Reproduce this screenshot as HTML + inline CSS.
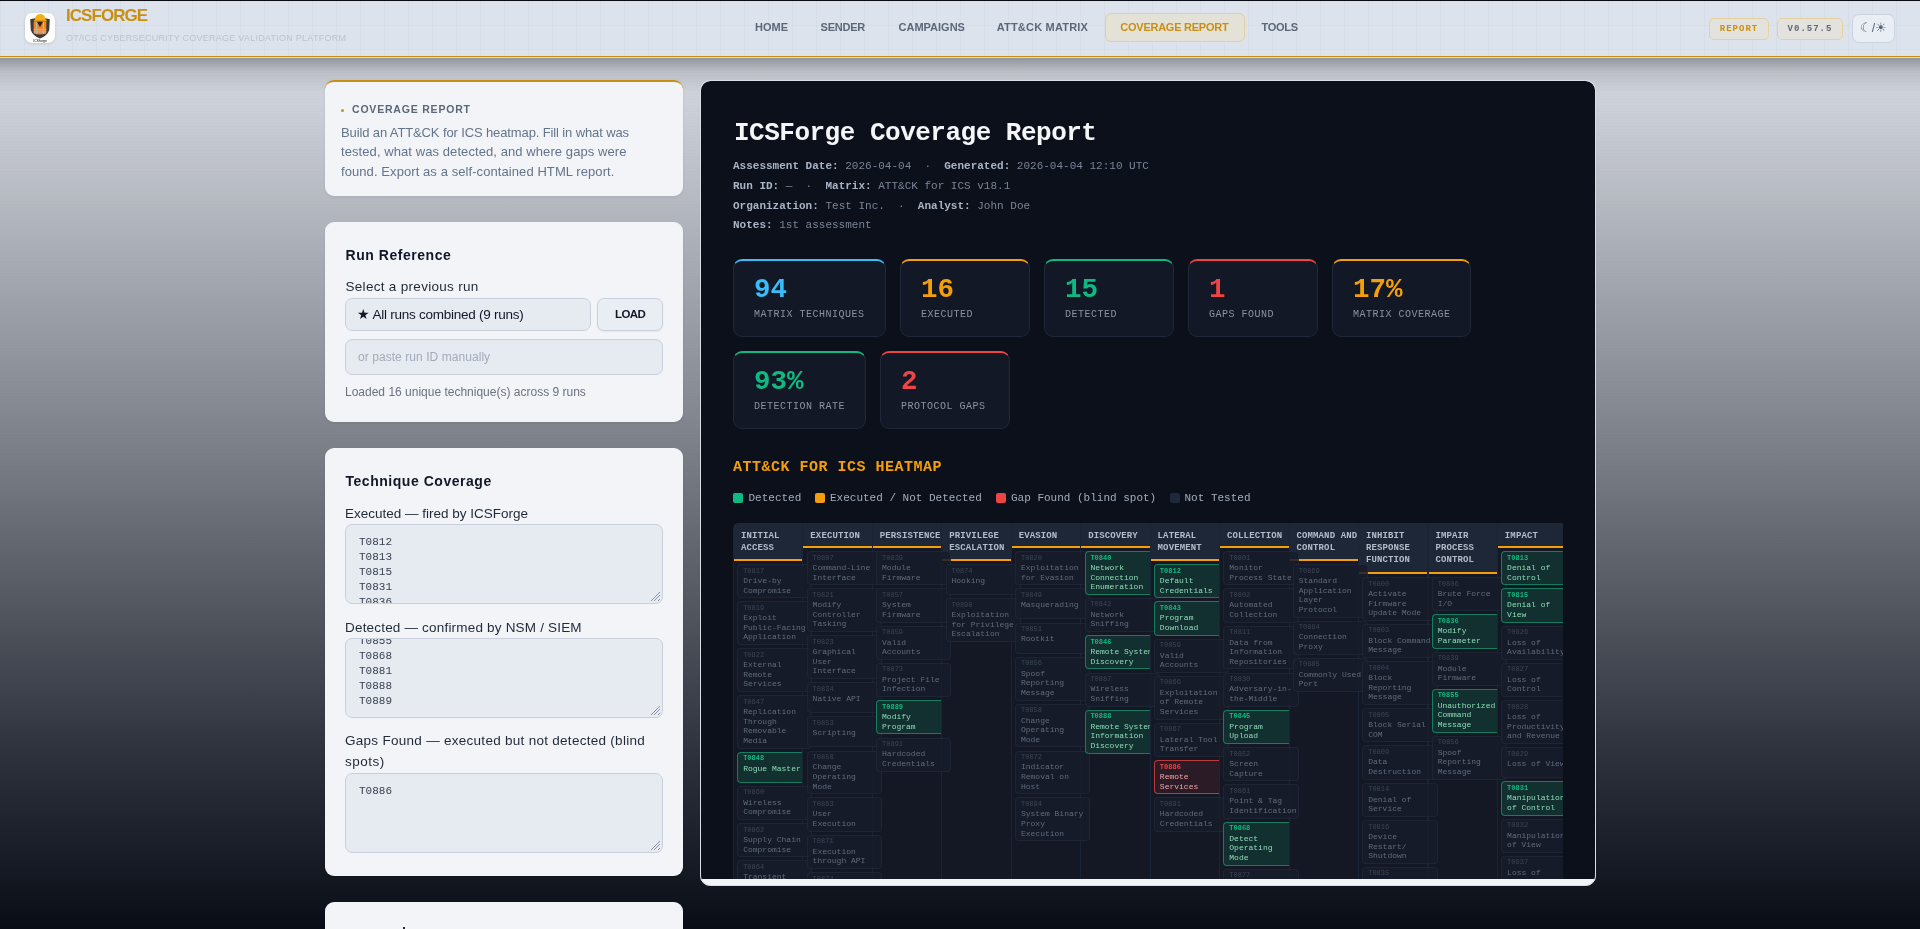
<!DOCTYPE html>
<html><head><meta charset="utf-8">
<style>
*{box-sizing:border-box;margin:0;padding:0}
html,body{width:1920px;height:929px;overflow:hidden}
body{font-family:"Liberation Sans",sans-serif;position:relative;
background:repeating-linear-gradient(to bottom,rgba(0,0,0,.008) 0 1px,transparent 1px 3px),linear-gradient(to bottom,#c9cdd5 0px,#cdd1d9 100px,#7b7f87 450px,#2b303a 760px,#090d16 929px);}
.abs{position:absolute}
/* header */
#topline{position:absolute;left:0;top:0;width:1920px;height:1px;background:#0b0d12}
#hdr{position:absolute;left:0;top:1px;width:1920px;height:55px;background-color:#dde3ec;
background-image:linear-gradient(to right,rgba(150,160,180,.08) 1px,transparent 1px),linear-gradient(to bottom,rgba(150,160,180,.08) 1px,transparent 1px);
background-size:24px 24px;background-position:0 0,0 0;}
#gold{position:absolute;left:0;top:56px;width:1920px;height:1px;background:#c98f12}
#hl2{position:absolute;left:0;top:57px;width:1920px;height:1px;background:#d3d9e6}
#shadow{position:absolute;left:0;top:58px;width:1920px;height:34px;background:linear-gradient(to bottom,rgba(70,72,78,.42),rgba(70,72,78,.12) 40%,rgba(70,72,78,0))}
.logo{position:absolute;left:25px;top:13px;width:30px;height:30px;border-radius:7px;background:#fdfdf9;box-shadow:0 1px 3px rgba(0,0,0,.12);overflow:hidden}
.brand{position:absolute;left:66px;top:7.4px;font-weight:bold;font-size:17px;color:#c98f12;letter-spacing:-0.95px;line-height:1}
.sub{position:absolute;left:66px;top:33.6px;font-size:9px;color:#bcc3cf;letter-spacing:0.25px;line-height:1;white-space:nowrap}
.nav{position:absolute;top:21.9px;font-weight:bold;font-size:11px;color:#5b6779;letter-spacing:0;line-height:1;white-space:nowrap}
.navact{position:absolute;left:1105px;top:13px;width:140px;height:29px;border:1px solid #e3cf9b;border-radius:6px;background:#e4e1d6}
.badge{position:absolute;top:17.5px;height:22px;border:1px solid #e6d19e;border-radius:5px;background:#e3e2dc;font-family:"Liberation Mono",monospace;font-weight:bold;font-size:9px;letter-spacing:1px;line-height:20px;text-align:center}
.theme{position:absolute;left:1852px;top:14px;width:43px;height:29px;border:1px solid #cbd3df;border-radius:7px;background:#e9edf4;font-size:12.5px;color:#5b6779;text-align:center;line-height:27px}
/* cards */
.card{position:absolute;left:324.6px;width:358.6px;background:#f2f4f8;border-radius:9px;box-shadow:0 1px 3px rgba(0,0,0,.08)}

.t{position:absolute;white-space:nowrap;line-height:1}
.ta{position:absolute;left:345px;width:318px;height:80px;border:1px solid #c9d0db;border-radius:7px;background:#e6eaf1;overflow:hidden}
.ta .l{position:absolute;left:13px;font-family:"Liberation Mono",monospace;font-size:11px;line-height:1;color:#374151;white-space:nowrap}
.grip{position:absolute;right:2px;bottom:2px;width:9px;height:9px;background:linear-gradient(135deg,transparent 0 45%,#8a93a3 45% 52%,transparent 52% 65%,#8a93a3 65% 72%,transparent 72% 85%,#8a93a3 85% 92%,transparent 92%)}

.m{position:absolute;white-space:pre;line-height:1;font-family:"Liberation Mono",monospace}
.meta{font-size:11px;color:#7a8598}
.meta b{color:#a9b5c6}
.stat{position:absolute;height:78px;background:#121826;border:1px solid #1f2838;border-top:2px solid;border-radius:9px}
.stat .n{position:absolute;left:20px;top:15px;font-family:"Liberation Mono",monospace;font-weight:bold;font-size:27.5px;line-height:1;white-space:nowrap}
.stat .lb{position:absolute;left:20px;top:48.5px;font-family:"Liberation Mono",monospace;font-size:10px;letter-spacing:0.5px;line-height:1;color:#8a93a3;white-space:nowrap}
.sw{position:absolute;top:493px;width:10px;height:10px;border-radius:2px}
.lg{position:absolute;top:493.4px;font-family:"Liberation Mono",monospace;font-size:11px;line-height:1;color:#a3adbd;white-space:nowrap}
/*HEATCSS*/
#heat .hcol{position:absolute;background:#131824}
#heat .hhd{position:absolute;top:0;background:#1e2738;border-bottom:2px solid #f59e0b}
#heat .hht{position:absolute;font-family:"Liberation Mono",monospace;font-weight:bold;font-size:9px;letter-spacing:0.12px;line-height:1;color:#b3bcc9;white-space:nowrap}
#heat .hc{position:absolute;border:1px solid rgba(120,135,160,.09);border-radius:4px;background:rgba(22,28,42,.85);overflow:visible}
#heat .hc .hi{position:absolute;left:4.85px;font-family:"Liberation Mono",monospace;font-size:7px;line-height:1;color:#3d4656;white-space:nowrap}
#heat .hc .hn{position:absolute;left:4.85px;font-family:"Liberation Mono",monospace;font-size:8px;line-height:1;color:#626b7a;white-space:nowrap}
#heat .hc.g{background:#12302f;border-color:#177c5f;overflow:hidden;border-right:0;border-radius:4px 0 0 4px}
#heat .hc.g .hi{color:#10b981;font-weight:bold}
#heat .hc.g .hn{color:#8fdcb9}
#heat .hc.r{background:#2b1b27;border-color:#b83b3c;overflow:hidden;border-right:0;border-radius:4px 0 0 4px}
#heat .hc.r .hi{color:#ef4444;font-weight:bold}
#heat .hc.r .hn{color:#f0a3a3}
/*/HEATCSS*/</style></head><body><div style="position:absolute;left:0;top:0;width:1920px;height:929px;will-change:transform">
<div id="topline"></div>
<div id="hdr"></div>
<div id="gold"></div><div id="hl2"></div><div id="shadow"></div>
<div class="logo"><svg width="30" height="30" viewBox="0 0 30 30" style="position:absolute;left:0;top:0">
<path d="M5.2 6.2 Q15 3.8 24.8 6.2 L24.2 17 Q22.5 22.5 15 25.6 Q7.5 22.5 5.8 17 Z" fill="#3b3b3d"/>
<path d="M8.6 8.6 L12.6 8.2 L15 12 L17.4 8.2 L21.4 8.6 L21.2 20.5 Q15 22.6 8.8 20.5 Z" fill="#f08424"/>
<rect x="8.7" y="16" width="12.6" height="1.3" fill="#b9b3a8"/><rect x="8.7" y="18.3" width="12.6" height="1.2" fill="#b9b3a8"/>
<path d="M11.8 8.4 L15 14.2 L18.2 8.4 Z" fill="#2a2320"/><rect x="11" y="9" width="1.1" height="12" fill="#c9b7a0"/><rect x="17.9" y="9" width="1.1" height="12" fill="#c9b7a0"/><path d="M9.8 7.6 Q10.2 1.2 15.2 1 Q20.4 1.2 20.8 7.6 Z" fill="#f2b01c"/><rect x="8.8" y="6.8" width="13" height="1.6" rx=".8" fill="#e39e10"/>
<text x="15" y="28.6" font-family="Liberation Sans" font-size="3.6" text-anchor="middle" fill="#111">ICSforge</text>
</svg></div>
<div class="brand">ICSFORGE</div>
<div class="sub">OT/ICS CYBERSECURITY COVERAGE VALIDATION PLATFORM</div>
<div class="navact"></div>
<div class="nav" style="left:755px">HOME</div>
<div class="nav" style="left:820.6px;letter-spacing:-0.25px">SENDER</div>
<div class="nav" style="left:898.5px">CAMPAIGNS</div>
<div class="nav" style="left:996.7px;letter-spacing:0.2px">ATT&amp;CK MATRIX</div>
<div class="nav" style="left:1120.3px;color:#c98f12;letter-spacing:-0.25px">COVERAGE REPORT</div>
<div class="nav" style="left:1261.6px;letter-spacing:-0.3px">TOOLS</div>
<div class="badge" style="left:1709px;width:60px;color:#c98f12">REPORT</div>
<div class="badge" style="left:1777px;width:66px;color:#5b6779">V0.57.5</div>
<div class="theme">☾/☀</div>


<div class="card" style="top:80px;height:116px;border-top:2px solid #c98f12"></div>
<div class="card" style="top:222px;height:200px"></div>
<div class="card" style="top:448px;height:428px"></div>
<div class="card" style="top:902px;height:60px"></div><div class="abs" style="left:403px;top:926.5px;width:2px;height:3px;background:#222833"></div>
<div class="abs" style="left:340.9px;top:108.6px;width:3.5px;height:3.5px;border-radius:50%;background:#c98f12"></div>
<div class="t" id="c1h" style="left:352px;top:103.6px;font-size:10.5px;font-weight:bold;color:#5a6779;letter-spacing:0.8px">COVERAGE REPORT</div>
<div class="t" id="c1p1" style="left:341px;top:126px;font-size:13px;color:#64748b;letter-spacing:-0.12px">Build an ATT&amp;CK for ICS heatmap. Fill in what was</div>
<div class="t" id="c1p2" style="left:341px;top:145px;font-size:13px;color:#64748b;letter-spacing:0.08px">tested, what was detected, and where gaps were</div>
<div class="t" id="c1p3" style="left:341px;top:164.5px;font-size:13px;color:#64748b;letter-spacing:0.08px">found. Export as a self-contained HTML report.</div>

<div class="t" id="c2h" style="left:345.5px;top:248px;letter-spacing:0.54px;font-size:14px;font-weight:bold;color:#111827">Run Reference</div>
<div class="t" id="c2l" style="left:345.5px;top:280px;letter-spacing:0.3px;font-size:13.5px;color:#1f2937">Select a previous run</div>
<div class="abs" style="left:345px;top:298px;width:246px;height:33px;border:1px solid #c9d0db;border-radius:7px;background:#e6eaf1"></div>
<div class="t" id="c2s" style="left:357px;top:308px;letter-spacing:-0.25px;font-size:13.5px;color:#111827">★ All runs combined (9 runs)</div>
<div class="abs" style="left:597px;top:298px;width:66px;height:33px;border:1px solid #c9d0db;border-radius:7px;background:#e9edf4;box-shadow:0 1px 2px rgba(0,0,0,.06)"></div>
<div class="t" id="c2b" style="left:615px;top:309px;font-size:11.5px;font-weight:bold;color:#111827;letter-spacing:-0.6px">LOAD</div>
<div class="abs" style="left:345px;top:339px;width:318px;height:36px;border:1px solid #c9d0db;border-radius:7px;background:#e6eaf1"></div>
<div class="t" id="c2i" style="left:358px;top:351px;letter-spacing:0.06px;font-size:12px;color:#a3abb9">or paste run ID manually</div>
<div class="t" id="c2n" style="left:345px;top:386px;font-size:12px;color:#6b7280">Loaded 16 unique technique(s) across 9 runs</div>

<div class="t" id="c3h" style="left:345.5px;top:473.5px;letter-spacing:0.53px;font-size:14px;font-weight:bold;color:#111827">Technique Coverage</div>
<div class="t" id="c3a" style="left:345px;top:507px;font-size:13.5px;color:#1f2937">Executed — fired by ICSForge</div>
<div class="ta" style="top:524px"><div class="l" style="top:12px">T0812</div><div class="l" style="top:27px">T0813</div><div class="l" style="top:42px">T0815</div><div class="l" style="top:57px">T0831</div><div class="l" style="top:72px">T0836</div><div class="grip"></div></div>
<div class="t" id="c3b" style="left:345px;top:620.5px;letter-spacing:0.19px;font-size:13.5px;color:#1f2937">Detected — confirmed by NSM / SIEM</div>
<div class="ta" style="top:638px"><div class="l" style="top:-3px">T0855</div><div class="l" style="top:12px">T0868</div><div class="l" style="top:27px">T0881</div><div class="l" style="top:42px">T0888</div><div class="l" style="top:57px">T0889</div><div class="grip"></div></div>
<div class="t" id="c3c1" style="left:345px;top:733.5px;letter-spacing:0.28px;font-size:13.5px;color:#1f2937">Gaps Found — executed but not detected (blind</div>
<div class="t" id="c3c2" style="left:345px;top:754.5px;letter-spacing:0.5px;font-size:13.5px;color:#1f2937">spots)</div>
<div class="ta" style="top:773px"><div class="l" style="top:12px">T0886</div><div class="grip"></div></div>
<div class="abs" style="left:700px;top:80px;width:896px;height:806px;background:#f2f4f8;border:1px solid #d8dde6;border-radius:10px;overflow:hidden">
  <div class="abs" style="left:0;top:0;width:894px;height:798px;background:#0b101a;border-radius:9px 9px 0 0"></div>
</div>

<div class="m" style="left:734px;top:120.3px;font-size:26px;font-weight:bold;letter-spacing:-0.5px;color:#f5f6f8">ICSForge Coverage Report</div>
<div class="m meta" style="left:733px;top:160.8px"><b>Assessment Date:</b> 2026-04-04  ·  <b>Generated:</b> 2026-04-04 12:10 UTC</div>
<div class="m meta" style="left:733px;top:180.7px"><b>Run ID:</b> —  ·  <b>Matrix:</b> ATT&amp;CK for ICS v18.1</div>
<div class="m meta" style="left:733px;top:200.6px"><b>Organization:</b> Test Inc.  ·  <b>Analyst:</b> John Doe</div>
<div class="m meta" style="left:733px;top:219.8px"><b>Notes:</b> 1st assessment</div>

<div class="stat" style="left:733px;top:259px;width:153px;border-top-color:#38bdf8"><div class="n" style="color:#38bdf8">94</div><div class="lb">MATRIX TECHNIQUES</div></div>
<div class="stat" style="left:900px;top:259px;width:130px;border-top-color:#f59e0b"><div class="n" style="color:#f59e0b">16</div><div class="lb">EXECUTED</div></div>
<div class="stat" style="left:1044px;top:259px;width:130px;border-top-color:#10b981"><div class="n" style="color:#10b981">15</div><div class="lb">DETECTED</div></div>
<div class="stat" style="left:1188px;top:259px;width:130px;border-top-color:#ef4444"><div class="n" style="color:#ef4444">1</div><div class="lb">GAPS FOUND</div></div>
<div class="stat" style="left:1332px;top:259px;width:139px;border-top-color:#f59e0b"><div class="n" style="color:#f59e0b">17%</div><div class="lb">MATRIX COVERAGE</div></div>
<div class="stat" style="left:733px;top:351px;width:133px;border-top-color:#10b981"><div class="n" style="color:#10b981">93%</div><div class="lb">DETECTION RATE</div></div>
<div class="stat" style="left:880px;top:351px;width:130px;border-top-color:#ef4444"><div class="n" style="color:#ef4444">2</div><div class="lb">PROTOCOL GAPS</div></div>

<div class="m" style="left:733px;top:459.7px;font-size:15px;font-weight:bold;letter-spacing:0.5px;color:#f59e0b">ATT&amp;CK FOR ICS HEATMAP</div>
<div class="sw" style="left:733px;background:#10b981"></div><div class="lg" style="left:748.5px">Detected</div>
<div class="sw" style="left:815px;background:#f59e0b"></div><div class="lg" style="left:830px">Executed / Not Detected</div>
<div class="sw" style="left:996px;background:#ef4444"></div><div class="lg" style="left:1011px">Gap Found (blind spot)</div>
<div class="sw" style="left:1170px;background:#1e293b"></div><div class="lg" style="left:1184.5px">Not Tested</div>
<!--HEATMAP-->
<div id="heat" style="position:absolute;left:733px;top:523px;width:830px;height:356px;overflow:hidden;background:#1b2434;border-radius:6px 0 0 0">
<div class="hcol" style="left:1.00px;top:38px;width:68.45px;height:318px"></div>
<div class="hcol" style="left:70.45px;top:25px;width:68.45px;height:331px"></div>
<div class="hcol" style="left:139.90px;top:25px;width:68.45px;height:331px"></div>
<div class="hcol" style="left:209.35px;top:38px;width:68.45px;height:318px"></div>
<div class="hcol" style="left:278.80px;top:25px;width:68.45px;height:331px"></div>
<div class="hcol" style="left:348.25px;top:25px;width:68.45px;height:331px"></div>
<div class="hcol" style="left:417.70px;top:38px;width:68.45px;height:318px"></div>
<div class="hcol" style="left:487.15px;top:25px;width:68.45px;height:331px"></div>
<div class="hcol" style="left:556.60px;top:38px;width:68.45px;height:318px"></div>
<div class="hcol" style="left:626.05px;top:51px;width:68.45px;height:305px"></div>
<div class="hcol" style="left:695.50px;top:51px;width:68.45px;height:305px"></div>
<div class="hcol" style="left:764.95px;top:25px;width:68.45px;height:331px"></div>
<div class="hhd" style="left:1.00px;width:68.45px;height:38px"></div>
<div class="hht" style="left:7.90px;top:9.26px">INITIAL</div>
<div class="hht" style="left:7.90px;top:21.36px">ACCESS</div>
<div class="hhd" style="left:70.45px;width:68.45px;height:25px"></div>
<div class="hht" style="left:77.35px;top:9.26px">EXECUTION</div>
<div class="hhd" style="left:139.90px;width:68.45px;height:25px"></div>
<div class="hht" style="left:146.80px;top:9.26px">PERSISTENCE</div>
<div class="hhd" style="left:209.35px;width:68.45px;height:38px"></div>
<div class="hht" style="left:216.25px;top:9.26px">PRIVILEGE</div>
<div class="hht" style="left:216.25px;top:21.36px">ESCALATION</div>
<div class="hhd" style="left:278.80px;width:68.45px;height:25px"></div>
<div class="hht" style="left:285.70px;top:9.26px">EVASION</div>
<div class="hhd" style="left:348.25px;width:68.45px;height:25px"></div>
<div class="hht" style="left:355.15px;top:9.26px">DISCOVERY</div>
<div class="hhd" style="left:417.70px;width:68.45px;height:38px"></div>
<div class="hht" style="left:424.60px;top:9.26px">LATERAL</div>
<div class="hht" style="left:424.60px;top:21.36px">MOVEMENT</div>
<div class="hhd" style="left:487.15px;width:68.45px;height:25px"></div>
<div class="hht" style="left:494.05px;top:9.26px">COLLECTION</div>
<div class="hhd" style="left:556.60px;width:68.45px;height:38px"></div>
<div class="hht" style="left:563.50px;top:9.26px">COMMAND AND</div>
<div class="hht" style="left:563.50px;top:21.36px">CONTROL</div>
<div class="hhd" style="left:626.05px;width:68.45px;height:51px"></div>
<div class="hht" style="left:632.95px;top:9.26px">INHIBIT</div>
<div class="hht" style="left:632.95px;top:21.36px">RESPONSE</div>
<div class="hht" style="left:632.95px;top:33.46px">FUNCTION</div>
<div class="hhd" style="left:695.50px;width:68.45px;height:51px"></div>
<div class="hht" style="left:702.40px;top:9.26px">IMPAIR</div>
<div class="hht" style="left:702.40px;top:21.36px">PROCESS</div>
<div class="hht" style="left:702.40px;top:33.46px">CONTROL</div>
<div class="hhd" style="left:764.95px;width:68.45px;height:25px"></div>
<div class="hht" style="left:771.85px;top:9.26px">IMPACT</div>
<div class="hc" style="left:4.30px;top:41.00px;width:75.20px;height:34.30px"><div class="hi" style="top:2.53px">T0817</div><div class="hn" style="top:11.97px">Drive-by</div><div class="hn" style="top:21.57px">Compromise</div></div>
<div class="hc" style="left:4.30px;top:78.30px;width:75.20px;height:43.90px"><div class="hi" style="top:2.53px">T0819</div><div class="hn" style="top:11.97px">Exploit</div><div class="hn" style="top:21.57px">Public-Facing</div><div class="hn" style="top:31.17px">Application</div></div>
<div class="hc" style="left:4.30px;top:125.20px;width:75.20px;height:43.90px"><div class="hi" style="top:2.53px">T0822</div><div class="hn" style="top:11.97px">External</div><div class="hn" style="top:21.57px">Remote</div><div class="hn" style="top:31.17px">Services</div></div>
<div class="hc" style="left:4.30px;top:172.10px;width:75.20px;height:53.50px"><div class="hi" style="top:2.53px">T0847</div><div class="hn" style="top:11.97px">Replication</div><div class="hn" style="top:21.57px">Through</div><div class="hn" style="top:31.17px">Removable</div><div class="hn" style="top:40.77px">Media</div></div>
<div class="hc g" style="left:4.30px;top:228.60px;width:65.15px;height:31.20px"><div class="hi" style="top:2.53px">T0848</div><div class="hn" style="top:11.97px">Rogue Master</div></div>
<div class="hc" style="left:4.30px;top:262.80px;width:75.20px;height:34.30px"><div class="hi" style="top:2.53px">T0860</div><div class="hn" style="top:11.97px">Wireless</div><div class="hn" style="top:21.57px">Compromise</div></div>
<div class="hc" style="left:4.30px;top:300.10px;width:75.20px;height:34.30px"><div class="hi" style="top:2.53px">T0862</div><div class="hn" style="top:11.97px">Supply Chain</div><div class="hn" style="top:21.57px">Compromise</div></div>
<div class="hc" style="left:4.30px;top:337.40px;width:75.20px;height:34.30px"><div class="hi" style="top:2.53px">T0864</div><div class="hn" style="top:11.97px">Transient</div><div class="hn" style="top:21.57px">Cyber Asset</div></div>
<div class="hc" style="left:73.75px;top:28.00px;width:75.20px;height:34.30px"><div class="hi" style="top:2.53px">T0807</div><div class="hn" style="top:11.97px">Command-Line</div><div class="hn" style="top:21.57px">Interface</div></div>
<div class="hc" style="left:73.75px;top:65.30px;width:75.20px;height:43.90px"><div class="hi" style="top:2.53px">T0821</div><div class="hn" style="top:11.97px">Modify</div><div class="hn" style="top:21.57px">Controller</div><div class="hn" style="top:31.17px">Tasking</div></div>
<div class="hc" style="left:73.75px;top:112.20px;width:75.20px;height:43.90px"><div class="hi" style="top:2.53px">T0823</div><div class="hn" style="top:11.97px">Graphical</div><div class="hn" style="top:21.57px">User</div><div class="hn" style="top:31.17px">Interface</div></div>
<div class="hc" style="left:73.75px;top:159.10px;width:75.20px;height:31.20px"><div class="hi" style="top:2.53px">T0834</div><div class="hn" style="top:11.97px">Native API</div></div>
<div class="hc" style="left:73.75px;top:193.30px;width:75.20px;height:31.20px"><div class="hi" style="top:2.53px">T0853</div><div class="hn" style="top:11.97px">Scripting</div></div>
<div class="hc" style="left:73.75px;top:227.50px;width:75.20px;height:43.90px"><div class="hi" style="top:2.53px">T0858</div><div class="hn" style="top:11.97px">Change</div><div class="hn" style="top:21.57px">Operating</div><div class="hn" style="top:31.17px">Mode</div></div>
<div class="hc" style="left:73.75px;top:274.40px;width:75.20px;height:34.30px"><div class="hi" style="top:2.53px">T0863</div><div class="hn" style="top:11.97px">User</div><div class="hn" style="top:21.57px">Execution</div></div>
<div class="hc" style="left:73.75px;top:311.70px;width:75.20px;height:34.30px"><div class="hi" style="top:2.53px">T0871</div><div class="hn" style="top:11.97px">Execution</div><div class="hn" style="top:21.57px">through API</div></div>
<div class="hc" style="left:73.75px;top:349.00px;width:75.20px;height:31.20px"><div class="hi" style="top:2.53px">T0874</div><div class="hn" style="top:11.97px">Hooking</div></div>
<div class="hc" style="left:143.20px;top:28.00px;width:75.20px;height:34.30px"><div class="hi" style="top:2.53px">T0839</div><div class="hn" style="top:11.97px">Module</div><div class="hn" style="top:21.57px">Firmware</div></div>
<div class="hc" style="left:143.20px;top:65.30px;width:75.20px;height:34.30px"><div class="hi" style="top:2.53px">T0857</div><div class="hn" style="top:11.97px">System</div><div class="hn" style="top:21.57px">Firmware</div></div>
<div class="hc" style="left:143.20px;top:102.60px;width:75.20px;height:34.30px"><div class="hi" style="top:2.53px">T0859</div><div class="hn" style="top:11.97px">Valid</div><div class="hn" style="top:21.57px">Accounts</div></div>
<div class="hc" style="left:143.20px;top:139.90px;width:75.20px;height:34.30px"><div class="hi" style="top:2.53px">T0873</div><div class="hn" style="top:11.97px">Project File</div><div class="hn" style="top:21.57px">Infection</div></div>
<div class="hc g" style="left:143.20px;top:177.20px;width:65.15px;height:34.30px"><div class="hi" style="top:2.53px">T0889</div><div class="hn" style="top:11.97px">Modify</div><div class="hn" style="top:21.57px">Program</div></div>
<div class="hc" style="left:143.20px;top:214.50px;width:75.20px;height:34.30px"><div class="hi" style="top:2.53px">T0891</div><div class="hn" style="top:11.97px">Hardcoded</div><div class="hn" style="top:21.57px">Credentials</div></div>
<div class="hc" style="left:212.65px;top:41.00px;width:75.20px;height:31.20px"><div class="hi" style="top:2.53px">T0874</div><div class="hn" style="top:11.97px">Hooking</div></div>
<div class="hc" style="left:212.65px;top:75.20px;width:75.20px;height:43.90px"><div class="hi" style="top:2.53px">T0890</div><div class="hn" style="top:11.97px">Exploitation</div><div class="hn" style="top:21.57px">for Privilege</div><div class="hn" style="top:31.17px">Escalation</div></div>
<div class="hc" style="left:282.10px;top:28.00px;width:75.20px;height:34.30px"><div class="hi" style="top:2.53px">T0820</div><div class="hn" style="top:11.97px">Exploitation</div><div class="hn" style="top:21.57px">for Evasion</div></div>
<div class="hc" style="left:282.10px;top:65.30px;width:75.20px;height:31.20px"><div class="hi" style="top:2.53px">T0849</div><div class="hn" style="top:11.97px">Masquerading</div></div>
<div class="hc" style="left:282.10px;top:99.50px;width:75.20px;height:31.20px"><div class="hi" style="top:2.53px">T0851</div><div class="hn" style="top:11.97px">Rootkit</div></div>
<div class="hc" style="left:282.10px;top:133.70px;width:75.20px;height:43.90px"><div class="hi" style="top:2.53px">T0856</div><div class="hn" style="top:11.97px">Spoof</div><div class="hn" style="top:21.57px">Reporting</div><div class="hn" style="top:31.17px">Message</div></div>
<div class="hc" style="left:282.10px;top:180.60px;width:75.20px;height:43.90px"><div class="hi" style="top:2.53px">T0858</div><div class="hn" style="top:11.97px">Change</div><div class="hn" style="top:21.57px">Operating</div><div class="hn" style="top:31.17px">Mode</div></div>
<div class="hc" style="left:282.10px;top:227.50px;width:75.20px;height:43.90px"><div class="hi" style="top:2.53px">T0872</div><div class="hn" style="top:11.97px">Indicator</div><div class="hn" style="top:21.57px">Removal on</div><div class="hn" style="top:31.17px">Host</div></div>
<div class="hc" style="left:282.10px;top:274.40px;width:75.20px;height:43.90px"><div class="hi" style="top:2.53px">T0894</div><div class="hn" style="top:11.97px">System Binary</div><div class="hn" style="top:21.57px">Proxy</div><div class="hn" style="top:31.17px">Execution</div></div>
<div class="hc g" style="left:351.55px;top:28.00px;width:65.15px;height:43.90px"><div class="hi" style="top:2.53px">T0840</div><div class="hn" style="top:11.97px">Network</div><div class="hn" style="top:21.57px">Connection</div><div class="hn" style="top:31.17px">Enumeration</div></div>
<div class="hc" style="left:351.55px;top:74.90px;width:75.20px;height:34.30px"><div class="hi" style="top:2.53px">T0842</div><div class="hn" style="top:11.97px">Network</div><div class="hn" style="top:21.57px">Sniffing</div></div>
<div class="hc g" style="left:351.55px;top:112.20px;width:65.15px;height:34.30px"><div class="hi" style="top:2.53px">T0846</div><div class="hn" style="top:11.97px">Remote System</div><div class="hn" style="top:21.57px">Discovery</div></div>
<div class="hc" style="left:351.55px;top:149.50px;width:75.20px;height:34.30px"><div class="hi" style="top:2.53px">T0887</div><div class="hn" style="top:11.97px">Wireless</div><div class="hn" style="top:21.57px">Sniffing</div></div>
<div class="hc g" style="left:351.55px;top:186.80px;width:65.15px;height:43.90px"><div class="hi" style="top:2.53px">T0888</div><div class="hn" style="top:11.97px">Remote System</div><div class="hn" style="top:21.57px">Information</div><div class="hn" style="top:31.17px">Discovery</div></div>
<div class="hc g" style="left:421.00px;top:41.00px;width:65.15px;height:34.30px"><div class="hi" style="top:2.53px">T0812</div><div class="hn" style="top:11.97px">Default</div><div class="hn" style="top:21.57px">Credentials</div></div>
<div class="hc g" style="left:421.00px;top:78.30px;width:65.15px;height:34.30px"><div class="hi" style="top:2.53px">T0843</div><div class="hn" style="top:11.97px">Program</div><div class="hn" style="top:21.57px">Download</div></div>
<div class="hc" style="left:421.00px;top:115.60px;width:75.20px;height:34.30px"><div class="hi" style="top:2.53px">T0859</div><div class="hn" style="top:11.97px">Valid</div><div class="hn" style="top:21.57px">Accounts</div></div>
<div class="hc" style="left:421.00px;top:152.90px;width:75.20px;height:43.90px"><div class="hi" style="top:2.53px">T0866</div><div class="hn" style="top:11.97px">Exploitation</div><div class="hn" style="top:21.57px">of Remote</div><div class="hn" style="top:31.17px">Services</div></div>
<div class="hc" style="left:421.00px;top:199.80px;width:75.20px;height:34.30px"><div class="hi" style="top:2.53px">T0867</div><div class="hn" style="top:11.97px">Lateral Tool</div><div class="hn" style="top:21.57px">Transfer</div></div>
<div class="hc r" style="left:421.00px;top:237.10px;width:65.15px;height:34.30px"><div class="hi" style="top:2.53px">T0886</div><div class="hn" style="top:11.97px">Remote</div><div class="hn" style="top:21.57px">Services</div></div>
<div class="hc" style="left:421.00px;top:274.40px;width:75.20px;height:34.30px"><div class="hi" style="top:2.53px">T0891</div><div class="hn" style="top:11.97px">Hardcoded</div><div class="hn" style="top:21.57px">Credentials</div></div>
<div class="hc" style="left:490.45px;top:28.00px;width:75.20px;height:34.30px"><div class="hi" style="top:2.53px">T0801</div><div class="hn" style="top:11.97px">Monitor</div><div class="hn" style="top:21.57px">Process State</div></div>
<div class="hc" style="left:490.45px;top:65.30px;width:75.20px;height:34.30px"><div class="hi" style="top:2.53px">T0802</div><div class="hn" style="top:11.97px">Automated</div><div class="hn" style="top:21.57px">Collection</div></div>
<div class="hc" style="left:490.45px;top:102.60px;width:75.20px;height:43.90px"><div class="hi" style="top:2.53px">T0811</div><div class="hn" style="top:11.97px">Data from</div><div class="hn" style="top:21.57px">Information</div><div class="hn" style="top:31.17px">Repositories</div></div>
<div class="hc" style="left:490.45px;top:149.50px;width:75.20px;height:34.30px"><div class="hi" style="top:2.53px">T0830</div><div class="hn" style="top:11.97px">Adversary-in-</div><div class="hn" style="top:21.57px">the-Middle</div></div>
<div class="hc g" style="left:490.45px;top:186.80px;width:65.15px;height:34.30px"><div class="hi" style="top:2.53px">T0845</div><div class="hn" style="top:11.97px">Program</div><div class="hn" style="top:21.57px">Upload</div></div>
<div class="hc" style="left:490.45px;top:224.10px;width:75.20px;height:34.30px"><div class="hi" style="top:2.53px">T0852</div><div class="hn" style="top:11.97px">Screen</div><div class="hn" style="top:21.57px">Capture</div></div>
<div class="hc" style="left:490.45px;top:261.40px;width:75.20px;height:34.30px"><div class="hi" style="top:2.53px">T0861</div><div class="hn" style="top:11.97px">Point &amp; Tag</div><div class="hn" style="top:21.57px">Identification</div></div>
<div class="hc g" style="left:490.45px;top:298.70px;width:65.15px;height:43.90px"><div class="hi" style="top:2.53px">T0868</div><div class="hn" style="top:11.97px">Detect</div><div class="hn" style="top:21.57px">Operating</div><div class="hn" style="top:31.17px">Mode</div></div>
<div class="hc" style="left:490.45px;top:345.60px;width:75.20px;height:31.20px"><div class="hi" style="top:2.53px">T0877</div><div class="hn" style="top:11.97px">I/O Image</div></div>
<div class="hc" style="left:559.90px;top:41.00px;width:75.20px;height:53.50px"><div class="hi" style="top:2.53px">T0869</div><div class="hn" style="top:11.97px">Standard</div><div class="hn" style="top:21.57px">Application</div><div class="hn" style="top:31.17px">Layer</div><div class="hn" style="top:40.77px">Protocol</div></div>
<div class="hc" style="left:559.90px;top:97.50px;width:75.20px;height:34.30px"><div class="hi" style="top:2.53px">T0884</div><div class="hn" style="top:11.97px">Connection</div><div class="hn" style="top:21.57px">Proxy</div></div>
<div class="hc" style="left:559.90px;top:134.80px;width:75.20px;height:34.30px"><div class="hi" style="top:2.53px">T0885</div><div class="hn" style="top:11.97px">Commonly Used</div><div class="hn" style="top:21.57px">Port</div></div>
<div class="hc" style="left:629.35px;top:54.00px;width:75.20px;height:43.90px"><div class="hi" style="top:2.53px">T0800</div><div class="hn" style="top:11.97px">Activate</div><div class="hn" style="top:21.57px">Firmware</div><div class="hn" style="top:31.17px">Update Mode</div></div>
<div class="hc" style="left:629.35px;top:100.90px;width:75.20px;height:34.30px"><div class="hi" style="top:2.53px">T0803</div><div class="hn" style="top:11.97px">Block Command</div><div class="hn" style="top:21.57px">Message</div></div>
<div class="hc" style="left:629.35px;top:138.20px;width:75.20px;height:43.90px"><div class="hi" style="top:2.53px">T0804</div><div class="hn" style="top:11.97px">Block</div><div class="hn" style="top:21.57px">Reporting</div><div class="hn" style="top:31.17px">Message</div></div>
<div class="hc" style="left:629.35px;top:185.10px;width:75.20px;height:34.30px"><div class="hi" style="top:2.53px">T0805</div><div class="hn" style="top:11.97px">Block Serial</div><div class="hn" style="top:21.57px">COM</div></div>
<div class="hc" style="left:629.35px;top:222.40px;width:75.20px;height:34.30px"><div class="hi" style="top:2.53px">T0809</div><div class="hn" style="top:11.97px">Data</div><div class="hn" style="top:21.57px">Destruction</div></div>
<div class="hc" style="left:629.35px;top:259.70px;width:75.20px;height:34.30px"><div class="hi" style="top:2.53px">T0814</div><div class="hn" style="top:11.97px">Denial of</div><div class="hn" style="top:21.57px">Service</div></div>
<div class="hc" style="left:629.35px;top:297.00px;width:75.20px;height:43.90px"><div class="hi" style="top:2.53px">T0816</div><div class="hn" style="top:11.97px">Device</div><div class="hn" style="top:21.57px">Restart/</div><div class="hn" style="top:31.17px">Shutdown</div></div>
<div class="hc" style="left:629.35px;top:343.90px;width:75.20px;height:34.30px"><div class="hi" style="top:2.53px">T0835</div><div class="hn" style="top:11.97px">Manipulate</div><div class="hn" style="top:21.57px">I/O Image</div></div>
<div class="hc" style="left:698.80px;top:54.00px;width:75.20px;height:34.30px"><div class="hi" style="top:2.53px">T0806</div><div class="hn" style="top:11.97px">Brute Force</div><div class="hn" style="top:21.57px">I/O</div></div>
<div class="hc g" style="left:698.80px;top:91.30px;width:65.15px;height:34.30px"><div class="hi" style="top:2.53px">T0836</div><div class="hn" style="top:11.97px">Modify</div><div class="hn" style="top:21.57px">Parameter</div></div>
<div class="hc" style="left:698.80px;top:128.60px;width:75.20px;height:34.30px"><div class="hi" style="top:2.53px">T0839</div><div class="hn" style="top:11.97px">Module</div><div class="hn" style="top:21.57px">Firmware</div></div>
<div class="hc g" style="left:698.80px;top:165.90px;width:65.15px;height:43.90px"><div class="hi" style="top:2.53px">T0855</div><div class="hn" style="top:11.97px">Unauthorized</div><div class="hn" style="top:21.57px">Command</div><div class="hn" style="top:31.17px">Message</div></div>
<div class="hc" style="left:698.80px;top:212.80px;width:75.20px;height:43.90px"><div class="hi" style="top:2.53px">T0856</div><div class="hn" style="top:11.97px">Spoof</div><div class="hn" style="top:21.57px">Reporting</div><div class="hn" style="top:31.17px">Message</div></div>
<div class="hc g" style="left:768.25px;top:28.00px;width:65.15px;height:34.30px"><div class="hi" style="top:2.53px">T0813</div><div class="hn" style="top:11.97px">Denial of</div><div class="hn" style="top:21.57px">Control</div></div>
<div class="hc g" style="left:768.25px;top:65.30px;width:65.15px;height:34.30px"><div class="hi" style="top:2.53px">T0815</div><div class="hn" style="top:11.97px">Denial of</div><div class="hn" style="top:21.57px">View</div></div>
<div class="hc" style="left:768.25px;top:102.60px;width:75.20px;height:34.30px"><div class="hi" style="top:2.53px">T0826</div><div class="hn" style="top:11.97px">Loss of</div><div class="hn" style="top:21.57px">Availability</div></div>
<div class="hc" style="left:768.25px;top:139.90px;width:75.20px;height:34.30px"><div class="hi" style="top:2.53px">T0827</div><div class="hn" style="top:11.97px">Loss of</div><div class="hn" style="top:21.57px">Control</div></div>
<div class="hc" style="left:768.25px;top:177.20px;width:75.20px;height:43.90px"><div class="hi" style="top:2.53px">T0828</div><div class="hn" style="top:11.97px">Loss of</div><div class="hn" style="top:21.57px">Productivity</div><div class="hn" style="top:31.17px">and Revenue</div></div>
<div class="hc" style="left:768.25px;top:224.10px;width:75.20px;height:31.20px"><div class="hi" style="top:2.53px">T0829</div><div class="hn" style="top:11.97px">Loss of View</div></div>
<div class="hc g" style="left:768.25px;top:258.30px;width:65.15px;height:34.30px"><div class="hi" style="top:2.53px">T0831</div><div class="hn" style="top:11.97px">Manipulation</div><div class="hn" style="top:21.57px">of Control</div></div>
<div class="hc" style="left:768.25px;top:295.60px;width:75.20px;height:34.30px"><div class="hi" style="top:2.53px">T0832</div><div class="hn" style="top:11.97px">Manipulation</div><div class="hn" style="top:21.57px">of View</div></div>
<div class="hc" style="left:768.25px;top:332.90px;width:75.20px;height:34.30px"><div class="hi" style="top:2.53px">T0837</div><div class="hn" style="top:11.97px">Loss of</div><div class="hn" style="top:21.57px">Protection</div></div>
</div>
<!--/HEATMAP-->
</div></body></html>
